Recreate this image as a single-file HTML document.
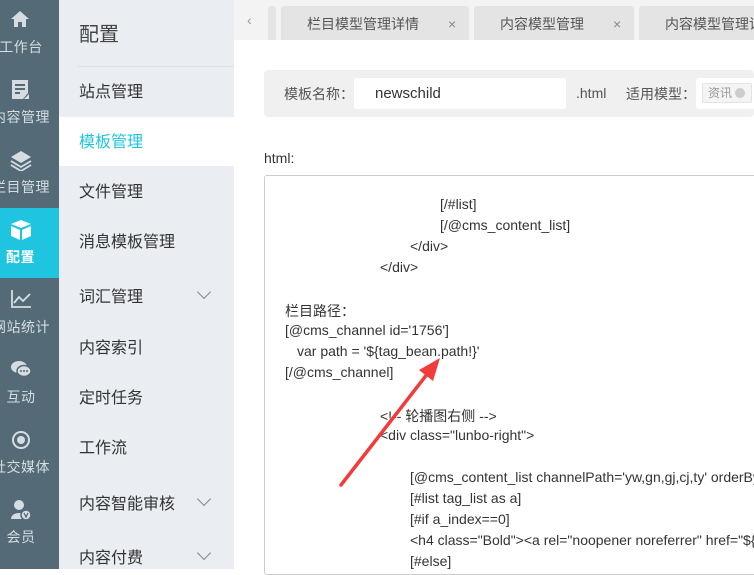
<!DOCTYPE html>
<html><head><meta charset="utf-8"><style>
*{margin:0;padding:0;box-sizing:border-box}
body{width:754px;height:569px;overflow:hidden;position:relative;background:#fff;font-family:"Liberation Sans","Noto Sans CJK SC",sans-serif;}
.side{position:absolute;left:0;top:0;width:59px;height:569px;background:#546a76;overflow:hidden}
.it{position:absolute;left:-29px;width:100px;height:70px;text-align:center;color:#d5dde2;font-size:14px}
.it svg{position:absolute;left:39px;top:11px}
.it span{position:absolute;left:0;right:0;top:39px;letter-spacing:0.5px}
.act{background:#1fc5e0;color:#fff;left:0;width:59px}
.act svg{left:10px}
.act span{left:-30px;right:-12px}
.menu{position:absolute;left:59px;top:0;width:175px;height:569px;background:#eaedf1}
.mi{position:absolute;left:20px;font-size:16px;color:#333}
.chev{position:absolute;left:140px;width:10px;height:10px;border-right:1.5px solid #888;border-bottom:1.5px solid #888;transform:rotate(45deg)}
.tabs{position:absolute;left:234px;top:0;width:520px;height:40px;background:#f3f3f3}
.tab{position:absolute;top:6px;height:34px;background:#e4e4e4;border-radius:3px 3px 0 0;font-size:14px;color:#555;line-height:36px}
.form{position:absolute;left:264px;top:70px;width:490px;height:47px;background:#f0f0f0;border-radius:4px;font-size:14px;color:#555}
.code{position:absolute;left:264px;top:175px;width:500px;height:400px;border:1px solid #ccc;border-radius:3px;font-size:14px;color:#333}
.code div{position:absolute;white-space:nowrap}
</style></head><body>
<div class="side">
 <div class="it" style="top:-2px"><svg width="20" height="20" viewBox="0 0 20 20"><path d="M10 2 L1 10 H4 V18 H8 V13 H12 V18 H16 V10 H19 Z" fill="#d5dde2"/></svg><span>工作台</span></div>
 <div class="it" style="top:68px"><svg width="20" height="22" viewBox="0 0 20 22"><path d="M2 1 H18 V14 L13 20 H2 Z" fill="#d5dde2"/><path d="M5 6 H15 M5 10 H15 M5 14 H10" stroke="#546a76" stroke-width="2"/><path d="M14 20 L19 15 V20 Z" fill="#d5dde2"/></svg><span>内容管理</span></div>
 <div class="it" style="top:138px"><svg width="22" height="22" viewBox="0 0 22 22"><path d="M11 2 L21 8 L11 14 L1 8 Z" fill="#d5dde2"/><path d="M1 12 L11 18 L21 12 M1 16 L11 22 L21 16" stroke="#d5dde2" stroke-width="1.8" fill="none"/></svg><span>栏目管理</span></div>
 <div class="it act" style="top:208px"><svg width="22" height="22" viewBox="0 0 22 22"><path d="M11 1 L21 5 L11 9 L1 5 Z" fill="#fff"/><path d="M1 7 L10 11 V21 L1 17 Z M21 7 L12 11 V21 L21 17 Z" fill="#fff"/></svg><span style="font-weight:bold">配置</span></div>
 <div class="it" style="top:278px"><svg width="22" height="20" viewBox="0 0 22 20"><path d="M2 1 V18 H21 M4 14 L9 8 L13 12 L20 5" stroke="#d5dde2" stroke-width="1.8" fill="none"/></svg><span>网站统计</span></div>
 <div class="it" style="top:348px"><svg width="22" height="20" viewBox="0 0 22 20"><ellipse cx="9" cy="8" rx="8" ry="6" fill="#d5dde2"/><ellipse cx="14" cy="12" rx="7" ry="5.5" fill="#d5dde2" stroke="#546a76" stroke-width="1.5"/><circle cx="11" cy="12" r="1" fill="#546a76"/><circle cx="14" cy="12" r="1" fill="#546a76"/><circle cx="17" cy="12" r="1" fill="#546a76"/></svg><span>互动</span></div>
 <div class="it" style="top:418px"><svg width="22" height="22" viewBox="0 0 22 22"><circle cx="11" cy="11" r="8" stroke="#d5dde2" stroke-width="2" fill="none"/><circle cx="11" cy="11" r="4" fill="#d5dde2"/></svg><span>社交媒体</span></div>
 <div class="it" style="top:488px"><svg width="22" height="22" viewBox="0 0 22 22"><circle cx="9" cy="6" r="5" fill="#d5dde2"/><path d="M1 20 C1 12 17 12 17 20 Z" fill="#d5dde2"/><circle cx="16" cy="16" r="5" fill="#d5dde2" stroke="#546a76" stroke-width="1.5"/><path d="M14 14 L16 18 L18 14" stroke="#546a76" stroke-width="1.3" fill="none"/></svg><span>会员</span></div>
</div>
<div class="menu">
 <div class="mi" style="top:18px;font-size:20px;color:#444">配置</div>
 <div style="position:absolute;left:19px;top:66px;width:156px;height:1px;background:#dde0e4"></div>
 <div class="mi" style="top:78px">站点管理</div>
 <div style="position:absolute;left:0;top:117px;width:175px;height:49px;background:#fff"></div>
 <div class="mi" style="top:128px;color:#1fc5e0">模板管理</div>
 <div class="mi" style="top:178px">文件管理</div>
 <div class="mi" style="top:228px">消息模板管理</div>
 <div class="mi" style="top:283px">词汇管理</div><div class="chev" style="top:287px"></div>
 <div class="mi" style="top:334px">内容索引</div>
 <div class="mi" style="top:384px">定时任务</div>
 <div class="mi" style="top:434px">工作流</div>
 <div class="mi" style="top:490px">内容智能审核</div><div class="chev" style="top:494px"></div>
 <div class="mi" style="top:544px">内容付费</div><div class="chev" style="top:548px"></div>
</div>
<div class="tabs">
 <div style="position:absolute;left:13px;top:12px;color:#999;font-size:14px">&lsaquo;</div>
 <div class="tab" style="width:8px;left:34px"></div>
 <div class="tab" style="left:47px;width:188px"><span style="position:absolute;left:26px">栏目模型管理详情</span><span style="position:absolute;left:167px;color:#888">×</span></div>
 <div class="tab" style="left:240px;width:160px"><span style="position:absolute;left:26px">内容模型管理</span><span style="position:absolute;left:139px;color:#888">×</span></div>
 <div class="tab" style="left:405px;width:130px"><span style="position:absolute;left:26px;white-space:nowrap">内容模型管理详情</span></div>
</div>
<div class="form">
 <span style="position:absolute;left:20px;top:14px">模板名称：</span>
 <div style="position:absolute;left:90px;top:8px;width:212px;height:31px;background:#fff;border-radius:3px"><span style="position:absolute;left:21px;top:7px;color:#333;font-size:15px">newschild</span></div>
 <span style="position:absolute;left:312px;top:15px">.html</span>
 <span style="position:absolute;left:362px;top:14px">适用模型：</span>
 <div style="position:absolute;left:432px;top:8px;width:70px;height:31px;background:#fff;border-radius:3px"><div style="position:absolute;left:6px;top:5px;width:50px;height:20px;background:#f4f4f4;border:1px solid #e4e4e4;border-radius:2px;font-size:12px;color:#999;line-height:18px;padding-left:5px">资讯 <span style="display:inline-block;width:10px;height:10px;border-radius:5px;background:#ccc;vertical-align:-1px"></span></div></div>
</div>
<div style="position:absolute;left:264px;top:150px;font-size:14px;color:#333">html:</div>
<div class="code">
 <div style="left:175px;top:20px">[/#list]</div>
 <div style="left:175px;top:41px">[/@cms_content_list]</div>
 <div style="left:145px;top:62px">&lt;/div&gt;</div>
 <div style="left:115px;top:83px">&lt;/div&gt;</div>
 <div style="left:20px;top:125px">栏目路径：</div>
 <div style="left:20px;top:146px">[@cms_channel id='1756']</div>
 <div style="left:32px;top:167px">var path = '${tag_bean.path!}'</div>
 <div style="left:20px;top:188px">[/@cms_channel]</div>
 <div style="left:115px;top:230px">&lt;!-- 轮播图右侧 --&gt;</div>
 <div style="left:115px;top:251px">&lt;div class="lunbo-right"&gt;</div>
 <div style="left:145px;top:293px">[@cms_content_list channelPath='yw,gn,gj,cj,ty' orderBy</div>
 <div style="left:145px;top:314px">[#list tag_list as a]</div>
 <div style="left:145px;top:335px">[#if a_index==0]</div>
 <div style="left:145px;top:356px">&lt;h4 class="Bold"&gt;&lt;a rel="noopener noreferrer" href="${</div>
 <div style="left:145px;top:377px">[#else]</div>
</div>
<svg style="position:absolute;left:0;top:0" width="754" height="569"><path d="M341 485 L428 373" stroke="#f03c3c" stroke-width="3.5" stroke-linecap="round"/><path d="M440 358 L419 370 L433 381 Z" fill="#f03c3c"/></svg>
</body></html>
